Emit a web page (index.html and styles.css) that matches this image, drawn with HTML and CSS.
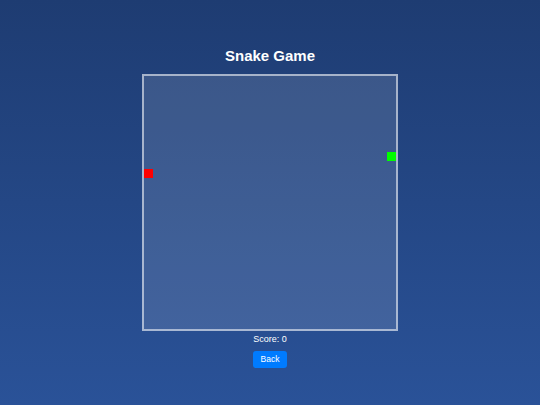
FILE: index.html
```html
<!DOCTYPE html>
<html>
<head>
<meta charset="utf-8">
<link rel="stylesheet" href="styles.css">
</head>
<body>
<main class="game">
  <h1 class="title">Snake Game</h1>
  <div class="board">
    <div class="cell food"></div>
    <div class="cell snake"></div>
  </div>
  <div class="score">Score: 0</div>
  <button class="back">Back</button>
</main>
</body>
</html>
```
FILE: styles.css
```css
html, body {
  margin: 0;
  padding: 0;
}
body {
  width: 540px;
  height: 405px;
  background: linear-gradient(to bottom, #1e3c72, #2a5298);
  font-family: "Liberation Sans", Arial, sans-serif;
  color: #fff;
  overflow: hidden;
}
.game {
  display: flex;
  flex-direction: column;
  align-items: center;
  padding-top: 47px;
}
.title {
  margin: 0;
  font-size: 15px;
  line-height: 18px;
  font-weight: bold;
}
.board {
  position: relative;
  margin-top: 9px;
  width: 252px;
  height: 253px;
  border: 2px solid rgba(255, 255, 255, 0.55);
  background: rgba(255, 255, 255, 0.12);
}
.cell {
  position: absolute;
  width: 9px;
  height: 9px;
}
.food {
  left: 0;
  top: 93px;
  background: #ff0000;
}
.snake {
  left: 243px;
  top: 76px;
  background: #00ff00;
}
.score {
  margin-top: 3px;
  font-size: 9px;
  line-height: 11px;
}
.back {
  margin-top: 6px;
  height: 17px;
  padding: 0 8px;
  border: none;
  border-radius: 3px;
  background: #007bff;
  color: #fff;
  font-family: "Liberation Sans", Arial, sans-serif;
  font-size: 8.5px;
  line-height: 17px;
}
```
